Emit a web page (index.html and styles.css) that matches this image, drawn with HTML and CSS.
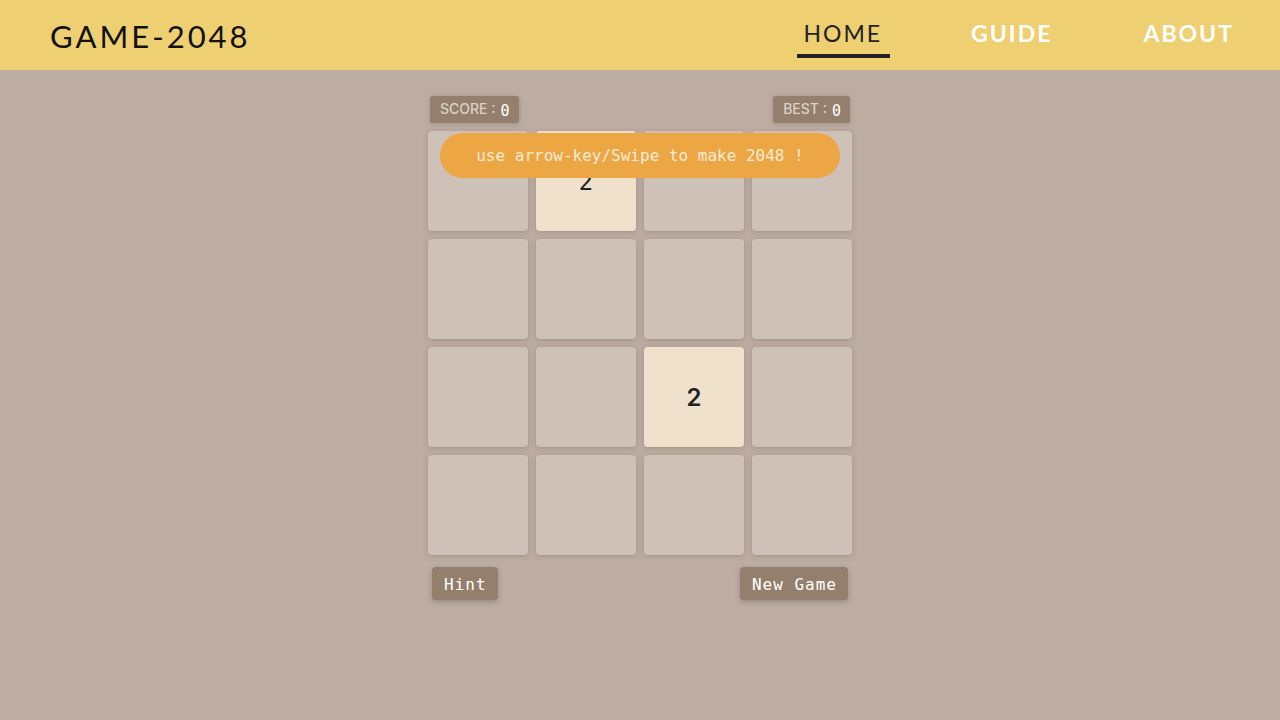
FILE: index.html
```html
<!DOCTYPE html>
<html>
<head>
<meta charset="utf-8">
<link rel="stylesheet" href="styles.css">
</head>
<body>
<header class="topbar">
  <div class="logo">GAME-2048</div>
  <nav class="nav">
    <a class="nav-item active">HOME</a>
    <a class="nav-item">GUIDE</a>
    <a class="nav-item last">ABOUT</a>
  </nav>
</header>
<main class="game">
  <div class="scores">
    <div class="badge"><span class="label">SCORE :</span><span class="num">0</span></div>
    <div class="badge"><span class="label">BEST :</span><span class="num">0</span></div>
  </div>
  <div class="board">
    <div class="tile"></div>
    <div class="tile t2 mono">2</div>
    <div class="tile"></div>
    <div class="tile"></div>
    <div class="tile"></div>
    <div class="tile"></div>
    <div class="tile"></div>
    <div class="tile"></div>
    <div class="tile"></div>
    <div class="tile"></div>
    <div class="tile t2">2</div>
    <div class="tile"></div>
    <div class="tile"></div>
    <div class="tile"></div>
    <div class="tile"></div>
    <div class="tile"></div>
    <div class="toast">use arrow-key/Swipe to make 2048 !</div>
  </div>
  <div class="actions">
    <button class="btn">Hint</button>
    <button class="btn">New Game</button>
  </div>
</main>
</body>
</html>
```
FILE: styles.css
```css
html, body { margin: 0; padding: 0; }
body {
  background: #bcaca2;
  width: 1280px;
  height: 720px;
  overflow: hidden;
  font-family: "Lato", "Open Sans", sans-serif;
}
.topbar {
  height: 70px;
  background: #eecf72;
  display: flex;
  align-items: center;
  justify-content: space-between;
  padding: 0 46px 0 50px;
  box-sizing: border-box;
}
.logo {
  font-family: "Lato", sans-serif;
  font-size: 31px;
  letter-spacing: 3px;
  color: #111;
  font-weight: 400;
  margin-top: 2px;
}
.nav { display: flex; align-items: flex-start; height: 70px; }
.nav-item {
  font-size: 23px;
  letter-spacing: 2px;
  color: #fff;
  font-weight: 700;
  margin-left: 81px;
  margin-top: 19px;
}
.nav-item.last { margin-left: 91px; }
.nav-item.active {
  color: #222;
  font-weight: 400;
  margin-left: 0;
  margin-top: 19px;
  padding: 0 8px 7px 6px;
  border-bottom: 4px solid #222;
  letter-spacing: 2px;
}
.game {
  width: 424px;
  margin: 26px auto 0;
}
.scores {
  display: flex;
  justify-content: space-between;
  padding: 0 2px;
  height: 27px;
}
.badge {
  background: #937f6b;
  border-radius: 3px;
  padding: 0 9px 0 10px;
  display: flex;
  align-items: center;
  box-shadow: 0 1px 4px rgba(80,60,40,0.25);
}
.label {
  color: #ddd1c6;
  font-size: 14px;
  font-weight: 500;
  font-family: "Inter", "Lato", sans-serif;
  margin-top: -2px;
}
.num {
  color: #fff;
  font-family: "DejaVu Sans Mono", monospace;
  font-size: 15px;
  margin-left: 5px;
  margin-top: 2px;
}
.board {
  position: relative;
  margin-top: 8px;
  display: grid;
  grid-template-columns: repeat(4, 100px);
  grid-auto-rows: 100px;
  gap: 8px;
}
.tile {
  background: #cec1b7;
  border-radius: 4px;
  box-shadow: 0 1px 5px rgba(120,95,80,0.35);
  display: flex;
  align-items: center;
  justify-content: center;
  font-family: "Inter", sans-serif;
  font-weight: 600;
  font-size: 24px;
  color: #222;
}
.tile.t2 { background: #efe1cb; }
.tile.mono { font-family: "DejaVu Sans Mono", monospace; font-weight: 400; padding-top: 2px; box-sizing: border-box; }
.toast {
  position: absolute;
  left: 12px;
  top: 2px;
  width: 400px;
  height: 45px;
  border-radius: 23px;
  background: #eca644;
  color: #f9ecd6;
  font-family: "DejaVu Sans Mono", monospace;
  font-size: 16px;
  display: flex;
  align-items: center;
  justify-content: center;
}
.actions {
  display: flex;
  justify-content: space-between;
  padding: 0 4px;
  margin-top: 12px;
}
.btn {
  background: #937f6b;
  border: none;
  border-radius: 4px;
  color: #fff;
  font-family: "DejaVu Sans Mono", monospace;
  font-size: 16px;
  letter-spacing: 1px;
  height: 33px;
  padding: 1px 11px 0 12px;
  box-shadow: 0 2px 5px rgba(80,60,40,0.3);
}
```
